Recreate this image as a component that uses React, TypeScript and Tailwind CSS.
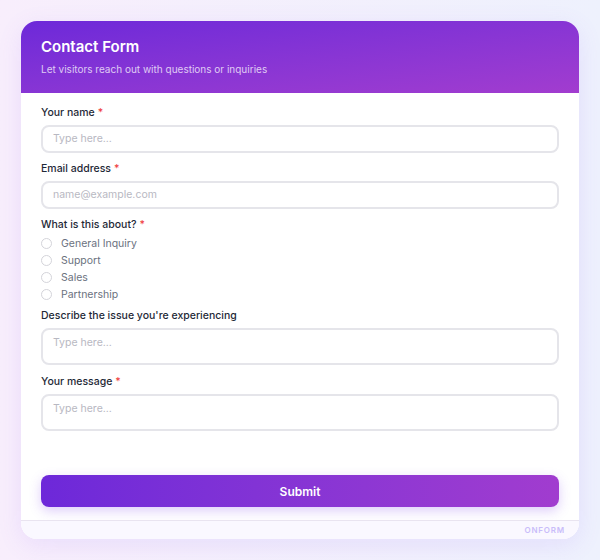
const font = { fontFamily: 'Inter, "Noto Sans", sans-serif' }

function Label({ text, required }: { text: string; required?: boolean }) {
  return (
    <p className="text-[10.5px] leading-4 font-medium text-[#1f2937]">
      {text}
      {required && <span className="text-[#ef4444] ml-[3px]">*</span>}
    </p>
  )
}

function Input({ placeholder }: { placeholder: string }) {
  return (
    <div className="mt-1 h-[28px] rounded-lg border-2 border-[#e5e5ea] px-[10px] flex items-center text-[10.5px] text-[#b8b8c2]">
      {placeholder}
    </div>
  )
}

function Area() {
  return (
    <div className="mt-1 h-[37px] rounded-lg border-2 border-[#e5e5ea] px-[10px] pt-[5px] text-[10.5px] text-[#b8b8c2]">
      Type here...
    </div>
  )
}

const topics = ['General Inquiry', 'Support', 'Sales', 'Partnership']

export default function App() {
  return (
    <div
      className="w-[600px] h-[560px] bg-gradient-to-r from-[#f8eefc] to-[#eef1fd] p-[21px]"
      style={font}
    >
      <div className="w-[558px] h-[518px] rounded-2xl bg-white overflow-hidden flex flex-col shadow-[0_6px_24px_rgba(139,92,246,0.12)]">
        <div className="h-[72px] bg-gradient-to-br from-[#6d28d9] to-[#a23ccf] px-5 pt-[16px]">
          <h1 className="text-[15px] leading-5 font-semibold text-white">Contact Form</h1>
          <p className="mt-[6px] text-[10px] leading-3 text-white/75">
            Let visitors reach out with questions or inquiries
          </p>
        </div>
        <div className="flex-1 px-5 pt-[12px] flex flex-col">
          <Label text="Your name" required />
          <Input placeholder="Type here..." />
          <div className="mt-2">
            <Label text="Email address" required />
            <Input placeholder="name@example.com" />
          </div>
          <div className="mt-2">
            <Label text="What is this about?" required />
            <div className="mt-[2px] flex flex-col">
              {topics.map(t => (
                <div key={t} className="h-[17px] flex items-center gap-[9px]">
                  <span className="w-[11px] h-[11px] rounded-full border border-[#d4d4da] bg-white" />
                  <span className="text-[10.5px] text-[#6b7280]">{t}</span>
                </div>
              ))}
            </div>
          </div>
          <div className="mt-[5px]">
            <Label text="Describe the issue you're experiencing" />
            <Area />
          </div>
          <div className="mt-[9px]">
            <Label text="Your message" required />
            <Area />
          </div>
          <div className="mt-[44px] h-[32px] rounded-lg bg-gradient-to-r from-[#6d28d9] to-[#a13ccf] flex items-center justify-center pt-[1px] text-[12px] font-semibold text-white shadow-[0_4px_12px_rgba(124,58,237,0.25)]">
            Submit
          </div>
        </div>
        <div className="h-[19px] border-t border-[#e9e4f0] bg-[#faf8ff] pr-[14px] flex items-center justify-end text-[8px] font-semibold tracking-[0.1em] text-[#c9bdfa]">
          ONFORM
        </div>
      </div>
    </div>
  )
}
